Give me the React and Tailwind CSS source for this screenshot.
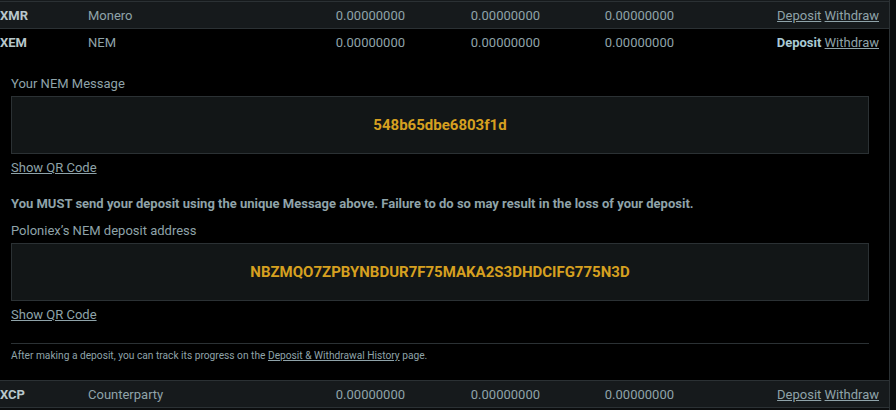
import React from "react";

const rowText = "text-[13px] text-[#8fa3a9]";

const Row = ({ sym, name, active, bg }) => (
  <div className={`flex items-center h-[26px] pt-[1px] ${bg} ${rowText}`}>
    <div className="w-[88px] font-bold text-[#b8c7cb]">{sym}</div>
    <div className="w-[222px]">{name}</div>
    <div className="w-[95px] text-right">0.00000000</div>
    <div className="w-[135px] text-right">0.00000000</div>
    <div className="w-[134px] text-right">0.00000000</div>
    <div className="flex-1 text-right pr-[10px]">
      {active ? (
        <span className="font-bold text-[#a9cad4]">Deposit</span>
      ) : (
        <a className="underline">Deposit</a>
      )}{" "}
      <a className="underline">Withdraw</a>
    </div>
  </div>
);

const CodeBox = ({ children }) => (
  <div className="h-[58px] bg-[#121617] border border-[#2b3134] flex items-center justify-center text-[15px] font-bold text-[#d6a020]">
    {children}
  </div>
);

export default function App() {
  return (
    <div
      className="w-[896px] h-[410px] bg-[#0c0e0f] flex overflow-hidden"
      style={{ fontFamily: "Roboto, 'Liberation Sans', sans-serif" }}
    >
      <div className="w-[890px] border-r border-[#2b3134] flex flex-col">
        <div className="h-[1px] bg-[#161a1c]" />
        <div className="border-t border-b border-[#2b3134]">
          <Row sym="XMR" name="Monero" bg="bg-[#161a1c]" />
        </div>
        <Row sym="XEM" name="NEM" active bg="bg-black" />

        {/* expanded deposit panel */}
        <div className="bg-black pl-[11px] pr-[20px] pt-[21px] pb-[17px] text-[#8fa3a9]">
          <div className="text-[13px] leading-[16px]">Your NEM Message</div>
          <div className="mt-[4px]">
            <CodeBox>548b65dbe6803f1d</CodeBox>
          </div>
          <div className="mt-[6px] text-[13px] leading-[16px]">
            <a className="underline">Show QR Code</a>
          </div>
          <div className="mt-[20px] text-[13px] leading-[16px] font-bold">
            You MUST send your deposit using the unique Message above. Failure
            to do so may result in the loss of your deposit.
          </div>
          <div className="mt-[11px] text-[13px] leading-[16px]">
            Poloniex’s NEM deposit address
          </div>
          <div className="mt-[4px]">
            <CodeBox>NBZMQO7ZPBYNBDUR7F75MAKA2S3DHDCIFG775N3D</CodeBox>
          </div>
          <div className="mt-[6px] text-[13px] leading-[16px]">
            <a className="underline">Show QR Code</a>
          </div>
          <div className="mt-[20px] h-[1px] bg-[#2b3134]" />
          <div className="mt-[5px] text-[10.2px] leading-[14px]">
            After making a deposit, you can track its progress on the{" "}
            <a className="underline">Deposit &amp; Withdrawal History</a> page.
          </div>
        </div>

        <div className="border-t border-b border-[#2b3134]">
          <Row sym="XCP" name="Counterparty" bg="bg-[#161a1c]" />
        </div>
      </div>
    </div>
  );
}
